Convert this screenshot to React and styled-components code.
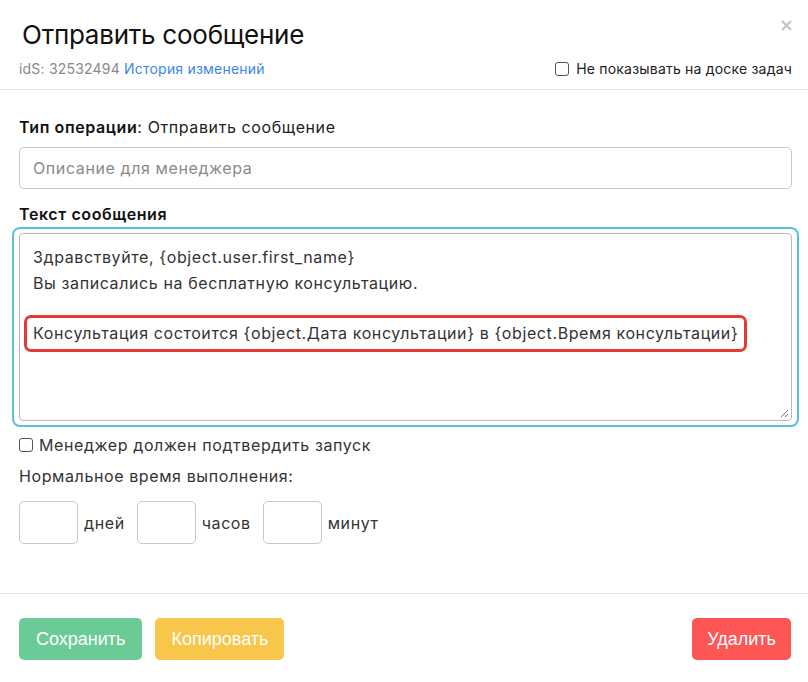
import React from "react";
import styled, { createGlobalStyle } from "styled-components";

const Global = createGlobalStyle`
  html, body { margin: 0; padding: 0; background: #fff; }
  body { font-family: Inter, "Noto Sans", sans-serif; color: #222; }
  * { box-sizing: border-box; }
`;

const Modal = styled.div`
  width: 808px;
  height: 682px;
  display: flex;
  flex-direction: column;
  background: #fff;
  position: relative;
`;

const Header = styled.div`
  padding: 19px 16px 0 19px;
  border-bottom: 1px solid #e5e5e5;
  height: 90px;
`;

const Title = styled.h1`
  margin: 0 0 0 3px;
  font-size: 26px;
  line-height: 32px;
  font-weight: 400;
  color: #111;
  letter-spacing: -0.25px;
`;

const Close = styled.button`
  position: absolute;
  top: 17px;
  right: 14px;
  border: 0;
  background: none;
  padding: 0;
  width: 16px;
  height: 16px;
  display: flex;
  align-items: center;
  justify-content: center;
  cursor: pointer;
`;

const MetaRow = styled.div`
  display: flex;
  justify-content: space-between;
  align-items: center;
  margin-top: 9px;
  font-size: 14px;
  line-height: 18px;
  letter-spacing: 0.2px;
`;

const Meta = styled.div`
  color: #8a8a8a;
`;

const Link = styled.a`
  color: #3d86e6;
  text-decoration: none;
`;

const CheckLabel = styled.label`
  display: flex;
  align-items: center;
  gap: ${p => p.$gap || 6}px;
  color: ${p => p.$dark ? "#333" : "#222"};
  font-size: ${p => p.$size || 14}px;
`;

const Box = styled.span`
  width: 14px;
  height: 14px;
  border: 1.5px solid #555;
  border-radius: 3px;
  display: inline-block;
  flex: none;
`;

const Body = styled.div`
  padding: 26px 16px 0 19px;
  flex: 1;
  letter-spacing: 0.6px;
`;

const Line = styled.div`
  font-size: 16px;
  line-height: 22px;
  color: #222;
`;

const Bold = styled.span`
  font-weight: 600;
  color: #111;
`;

const Input = styled.div`
  margin-top: 9px;
  height: 42px;
  border: 1px solid #c8c8cc;
  border-radius: 5px;
  padding: 0 13px;
  display: flex;
  align-items: center;
  font-size: 16px;
  color: #8a8a8a;
`;

const SectionLabel = styled.div`
  margin-top: 14px;
  font-size: 16px;
  line-height: 22px;
  font-weight: 600;
  color: #111;
`;

const Focus = styled.div`
  margin: 2px -7px 0 -7px;
  border: 2px solid #5bc0de;
  border-radius: 8px;
  padding: 4px 5px;
`;

const TextArea = styled.div`
  position: relative;
  height: 188px;
  border: 1px solid #b9b9bf;
  border-radius: 4px;
  padding: 11px 13px;
  font-size: 16px;
  line-height: 25.5px;
  color: #333;
`;

const Highlight = styled.div`
  width: fit-content;
  margin: -7px 0 0 -9px;
  padding: 3px 6px 3px 6px;
  border: 3.5px solid #e53a33;
  border-radius: 7px;
  line-height: 25px;
  white-space: nowrap;
`;

const Grip = styled.svg`
  position: absolute;
  right: 2px;
  bottom: 2px;
`;

const Confirm = styled.div`
  margin-top: 8px;
`;

const Normal = styled.div`
  margin-top: 10px;
  font-size: 16px;
  line-height: 22px;
  color: #333;
`;

const TimeRow = styled.div`
  margin-top: 14px;
  display: flex;
  align-items: center;
  font-size: 16px;
  color: #333;
`;

const SmallInput = styled.div`
  width: 59px;
  height: 43px;
  border: 1px solid #c8c8cc;
  border-radius: 5px;
`;

const Unit = styled.span`
  margin: 0 12px 0 6px;
`;

const Footer = styled.div`
  border-top: 1px solid #e5e5e5;
  height: 89px;
  padding: 24px 17px 0 19px;
  display: flex;
  gap: 13px;
`;

const colors = { green: "#6bcb96", yellow: "#f7c64a", red: "#fe5555" };

const Button = styled.button`
  height: 42px;
  padding: 0 ${p => p.$pad || 17}px;
  border: 0;
  border-radius: 5px;
  background: ${p => colors[p.$c]};
  color: #fff;
  font-family: "Liberation Sans", Arial, sans-serif;
  font-size: 18px;
  cursor: pointer;
  ${p => p.$push && "margin-left: auto;"}
`;

export default function App() {
  return (
    <Modal>
      <Global />
      <Header>
        <Title>Отправить сообщение</Title>
        <MetaRow>
          <Meta>
            idS: 32532494 <Link href="#">История изменений</Link>
          </Meta>
          <CheckLabel $gap={7}>
            <Box />
            Не показывать на доске задач
          </CheckLabel>
        </MetaRow>
      </Header>
      <Close aria-label="close">
        <svg width="11" height="11" viewBox="0 0 11 11">
          <path d="M1 1L10 10M10 1L1 10" stroke="#c4c4c4" strokeWidth="2.2" />
        </svg>
      </Close>
      <Body>
        <Line>
          <Bold>Тип операции</Bold>: Отправить сообщение
        </Line>
        <Input>Описание для менеджера</Input>
        <SectionLabel>Текст сообщения</SectionLabel>
        <Focus>
          <TextArea>
            <div>Здравствуйте, {"{object.user.first_name}"}</div>
            <div>Вы записались на бесплатную консультацию.</div>
            <div>&nbsp;</div>
            <Highlight>
              Консультация состоится {"{object.Дата консультации}"} в {"{object.Время консультации}"}
            </Highlight>
            <Grip width="10" height="10" viewBox="0 0 10 10">
              <path d="M9 2L2 9M9 6L6 9" stroke="#777" strokeWidth="1" />
            </Grip>
          </TextArea>
        </Focus>
        <Confirm>
          <CheckLabel $size={16} $dark>
            <Box />
            Менеджер должен подтвердить запуск
          </CheckLabel>
        </Confirm>
        <Normal>Нормальное время выполнения:</Normal>
        <TimeRow>
          <SmallInput />
          <Unit>дней</Unit>
          <SmallInput />
          <Unit>часов</Unit>
          <SmallInput />
          <Unit>минут</Unit>
        </TimeRow>
      </Body>
      <Footer>
        <Button $c="green">Сохранить</Button>
        <Button $c="yellow" $pad={16}>Копировать</Button>
        <Button $c="red" $pad={15} $push>Удалить</Button>
      </Footer>
    </Modal>
  );
}
